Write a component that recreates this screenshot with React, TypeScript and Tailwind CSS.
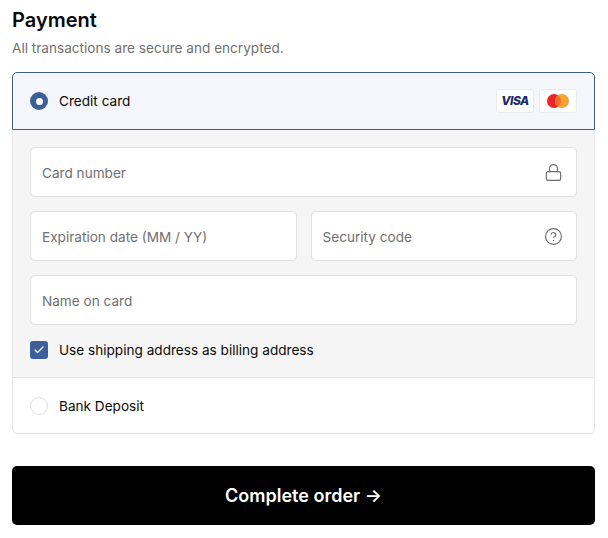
import { Lock, CircleHelp, Check } from 'lucide-react';

function Field({ label, icon, className = '' }: { label: string; icon?: React.ReactNode; className?: string }) {
  return (
    <div className={`flex h-[50px] items-center justify-between rounded-[5px] border border-[#e0e0e0] bg-white pl-[11px] pr-[13px] ${className}`}>
      <span className="pt-[2px] text-[13.6px] text-[#707070]">{label}</span>
      {icon}
    </div>
  );
}

function CardBadge({ children }: { children: React.ReactNode }) {
  return (
    <div className="flex h-[24px] w-[38px] items-center justify-center rounded-[3px] border border-[#ebebeb] bg-white">
      {children}
    </div>
  );
}

export default function App() {
  return (
    <div className="h-[538px] w-[608px] bg-white pl-[12px] pr-[13px] font-['Inter',sans-serif] text-[#0a0a0a]">
      <h1 className="pt-[7px] text-[20px] leading-[26px] font-semibold">Payment</h1>
      <p className="mt-[5px] text-[13.6px] leading-[20px] text-[#707070]">All transactions are secure and encrypted.</p>

      <div className="mt-[14px] rounded-[5px]">
        <div className="flex h-[58px] items-center justify-between rounded-t-[5px] border border-[#3f5f7f] bg-[#f4f6fb] pl-[17px] pr-[17px]">
          <div className="flex items-center gap-[11px]">
            <span className="flex h-[18px] w-[18px] items-center justify-center rounded-full bg-[#3c5f9b]">
              <span className="h-[7px] w-[7px] rounded-full bg-white" />
            </span>
            <span className="text-[13.6px] leading-[17px]">Credit card</span>
          </div>
          <div className="flex items-center gap-[5px]">
            <CardBadge>
              <span className="text-[12px] leading-none font-extrabold tracking-[-0.5px] text-[#1a2a6c] italic">VISA</span>
            </CardBadge>
            <CardBadge>
              <svg width="24" height="16" viewBox="0 0 24 16">
                <circle cx="8" cy="8" r="7" fill="#e8262a" />
                <circle cx="16" cy="8" r="7" fill="#f9a131" />
                <path d="M12 2.3a7 7 0 0 1 0 11.4a7 7 0 0 1 0-11.4z" fill="#f46a25" />
              </svg>
            </CardBadge>
          </div>
        </div>

        <div className="flex flex-col gap-[14px] border-x border-[#e8e8e8] bg-[#f5f5f5] px-[17px] pt-[18px]">
          <Field className="-mt-px" label="Card number" icon={<Lock className="h-[19px] w-[19px] text-[#6e6e6e]" strokeWidth={1.5} />} />
          <div className="grid grid-cols-2 gap-[14px]">
            <Field label="Expiration date (MM / YY)" />
            <Field label="Security code" icon={<CircleHelp className="h-[19px] w-[19px] text-[#6e6e6e]" strokeWidth={1.5} />} />
          </div>
          <Field label="Name on card" />
          <div className="flex h-[38px] items-start gap-[11px] pt-[2px]">
            <span className="flex h-[18px] w-[18px] items-center justify-center rounded-[3px] bg-[#3c5f9b]">
              <Check className="h-[12px] w-[12px] text-white" strokeWidth={2.5} />
            </span>
            <span className="text-[13.6px] leading-[18px]">Use shipping address as billing address</span>
          </div>
        </div>

        <div className="flex h-[57px] items-center gap-[11px] rounded-b-[5px] border border-[#e3e3e3] bg-white pl-[17px]">
          <span className="h-[18px] w-[18px] rounded-full border border-[#e0e0e0] bg-white" />
          <span className="pt-[2px] text-[13.6px]">Bank Deposit</span>
        </div>
      </div>

      <button className="mt-[32px] flex h-[59px] w-full items-center justify-center rounded-[5px] bg-black text-[18px] font-semibold text-white">
        Complete order →
      </button>
    </div>
  );
}
